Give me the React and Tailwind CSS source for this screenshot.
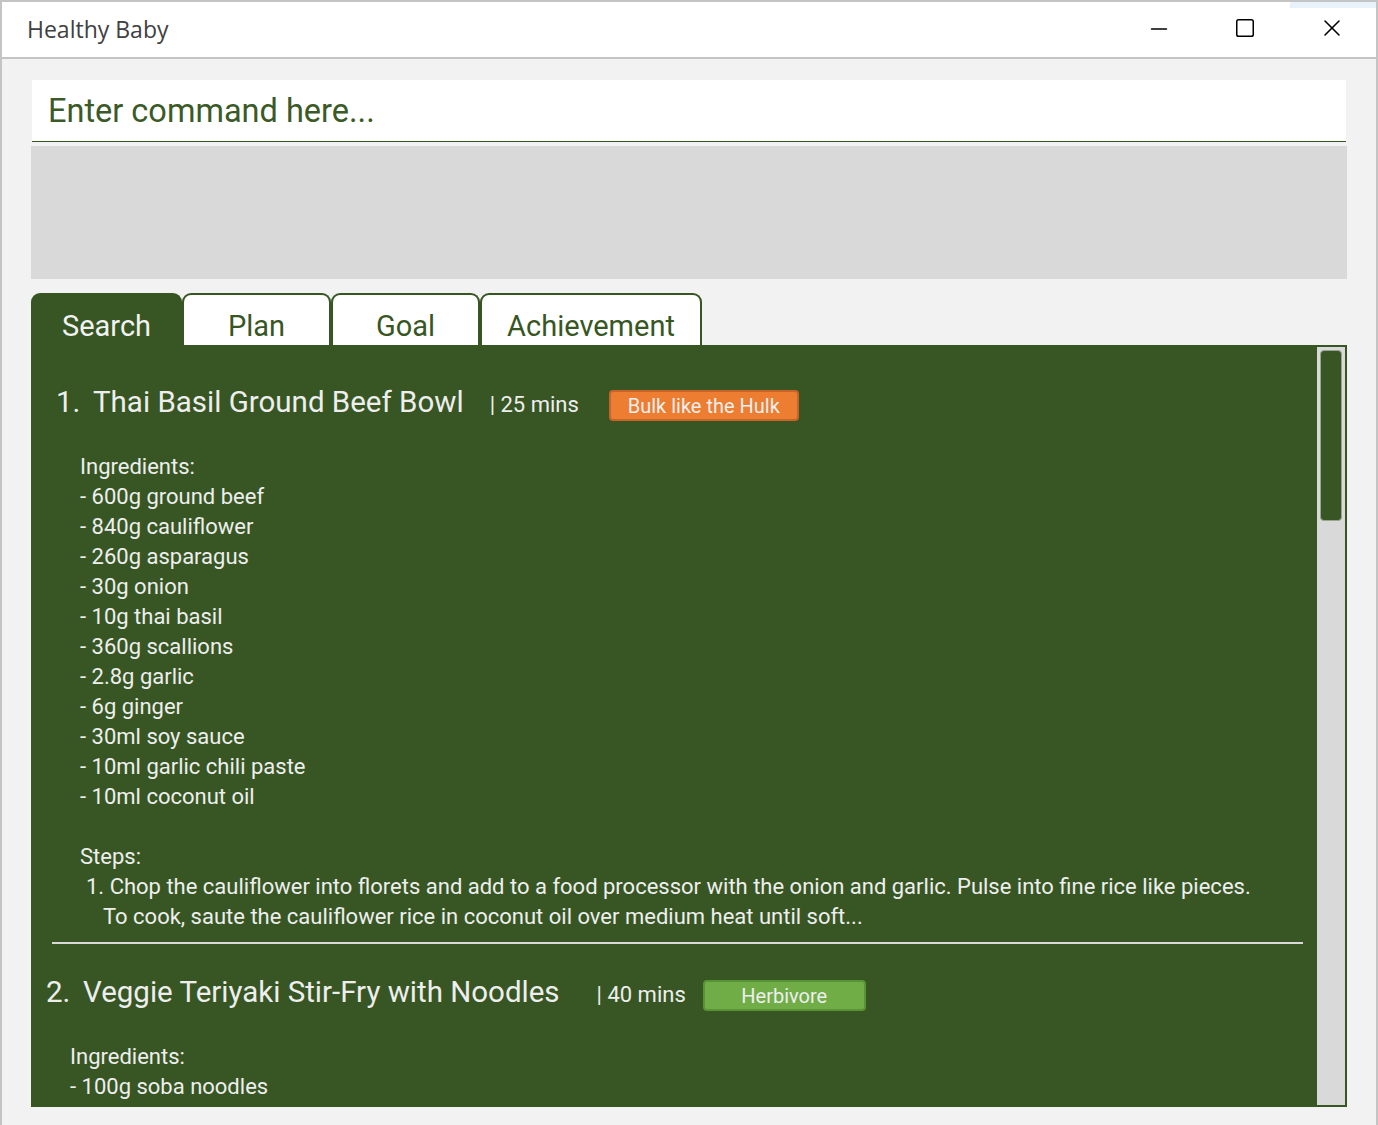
import { Minus, Square, X } from "lucide-react";

const recipes = [
  {
    id: 1,
    name: "Thai Basil Ground Beef Bowl",
    time: "25 mins",
    timeGap: "ml-[26px]",
    tag: "Bulk like the Hulk",
    tagClass: "w-[190px] ml-[30px] bg-[#ed7d31] border-[#c8632a]",
    indent: "pl-[23px]",
    ingredients: [
      "600g ground beef",
      "840g cauliflower",
      "260g asparagus",
      "30g onion",
      "10g thai basil",
      "360g scallions",
      "2.8g garlic",
      "6g ginger",
      "30ml soy sauce",
      "10ml garlic chili paste",
      "10ml coconut oil"
    ],
    steps: [
      "Chop the cauliflower into florets and add to a food processor with the onion and garlic. Pulse into fine rice like pieces.",
      "To cook, saute the cauliflower rice in coconut oil over medium heat until soft..."
    ]
  },
  {
    id: 2,
    name: "Veggie Teriyaki Stir-Fry with Noodles",
    time: "40 mins",
    timeGap: "ml-[37px]",
    tag: "Herbivore",
    tagClass: "w-[163px] ml-[17px] bg-[#70ad47] border-[#5a9236]",
    indent: "pl-[13px]",
    ingredients: ["100g soba noodles"],
    steps: []
  }
];

const tabs = [
  { label: "Search", width: "w-[151px]", active: true },
  { label: "Plan", width: "w-[149px]" },
  { label: "Goal", width: "w-[149px]" },
  { label: "Achievement", width: "w-[222px]" }
];

function RecipeCard({ recipe }) {
  return (
    <div className={recipe.indent}>
      <div className="flex h-[40px] items-center">
        <span className="w-[37px] text-[29.5px]">{recipe.id}.</span>
        <span className="text-[29.5px]">{recipe.name}</span>
        <span className={`mt-[5px] text-[22px] ${recipe.timeGap}`}>| {recipe.time}</span>
        <span className={`mt-[7px] flex h-[31px] items-center justify-center rounded-[4px] border-2 text-[20px] ${recipe.tagClass}`}>
          {recipe.tag}
        </span>
      </div>

      <div className="mt-[30px] pl-[24px] text-[22px] leading-[30px]">
        <div>Ingredients:</div>
        {recipe.ingredients.map((item) => (
          <div key={item}>- {item}</div>
        ))}
        {recipe.steps.length > 0 && (
          <>
            <div className="h-[30px]" />
            <div>Steps:</div>
            <div className="pl-[6px]">1. {recipe.steps[0]}</div>
            <div className="pl-[23px]">{recipe.steps[1]}</div>
          </>
        )}
      </div>
    </div>
  );
}

export default function App() {
  return (
    <div
      className="relative flex h-[1125px] w-[1378px] flex-col overflow-hidden border-x-2 border-t-2 border-[#c4c4c4] bg-[#f2f2f2]"
      style={{ fontFamily: "Roboto, 'Noto Sans', sans-serif" }}
    >
      <header className="relative flex h-[57px] flex-none items-center border-b-2 border-[#c4c4c4] bg-white">
        <span
          className="pl-[25px] text-[23px] text-[#404040]"
          style={{ fontFamily: "'Open Sans', 'Noto Sans', sans-serif" }}
        >
          Healthy Baby
        </span>
        <div className="absolute right-0 top-0 h-[6px] w-[86px] bg-[#e8f2fb]" />
        <div className="ml-auto flex items-center pb-[3px] text-black">
          <button type="button" className="flex h-[52px] w-[86px] items-center justify-center pt-[2px]">
            <Minus size={26} strokeWidth={1.2} />
          </button>
          <button type="button" className="flex h-[52px] w-[86px] items-center justify-center">
            <Square size={22} strokeWidth={1.5} absoluteStrokeWidth />
          </button>
          <button type="button" className="flex h-[52px] w-[88px] items-center justify-center">
            <X size={28} strokeWidth={1.3} />
          </button>
        </div>
      </header>

      <main className="ml-[29px] w-[1316px] pt-[21px]">
        <div className="mx-[1px] flex h-[62px] items-center border-b border-[#375623] bg-white pl-[16px] pt-[2px] text-[32.5px] text-[#3b5a27]">
          Enter command here...
        </div>
        <div className="mt-[4px] h-[133px] bg-[#d9d9d9]" />

        <div className="mt-[14px] flex h-[52px] items-end">
          {tabs.map((tab) => (
            <div
              key={tab.label}
              className={`flex h-[52px] items-center justify-center rounded-t-[9px] border-2 border-b-0 border-[#375623] pt-[14px] text-[29px] ${tab.width} ${
                tab.active ? "bg-[#375623] text-[#f2f2f2]" : "bg-white text-[#375623]"
              }`}
            >
              {tab.label}
            </div>
          ))}
        </div>

        <section className="flex h-[762px] border-2 border-[#375623] bg-[#375623] text-[#eeeeee]">
          <div className="min-w-0 flex-1 overflow-hidden pt-[35px]">
            <RecipeCard recipe={recipes[0]} />
            <div className="ml-[19px] mr-[14px] mt-[10px] h-[2px] bg-[#d9d9d9]" />
            <div className="pt-[28px]">
              <RecipeCard recipe={recipes[1]} />
            </div>
          </div>
          <div className="w-[28px] flex-none bg-[#d9d9d9] px-[3px] pt-[3px]">
            <div className="h-[171px] rounded-[4px] border border-[#9aa58f] bg-[#375623]" />
          </div>
        </section>
      </main>
    </div>
  );
}
